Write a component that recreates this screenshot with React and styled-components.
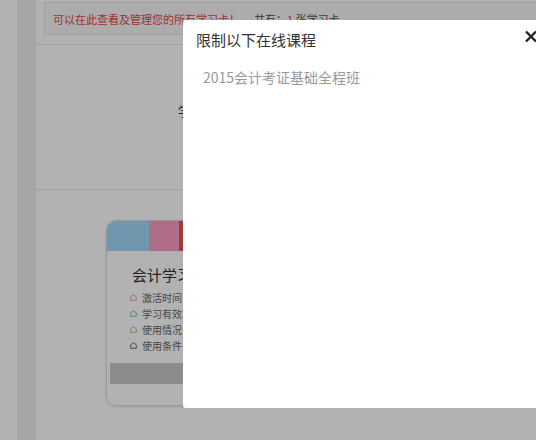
import React from 'react';
import styled, { createGlobalStyle } from 'styled-components';

const GlobalStyle = createGlobalStyle`
    html, body {
        margin: 0;
        padding: 0;
        width: 536px;
        height: 440px;
        overflow: hidden;
        background: #fff;
        font-family: "Noto Sans CJK SC", "Noto Sans", sans-serif;
    }
`;

const Page = styled.div`
    display: flex;
    height: 440px;
`;

const Gutter = styled.div`
    width: 17px;
    background: #fff;
`;

const Sidebar = styled.div`
    width: 19px;
    background: #eceff0;
`;

const Main = styled.div`
    flex: 1;
    display: flex;
    flex-direction: column;
`;

const Notice = styled.div`
    margin: 2px 0 0 8px;
    height: 31px;
    border: 1px solid #e6e6e6;
    border-right: none;
    background: #f6f6f6;
    padding-left: 8px;
    display: flex;
    align-items: center;
    font-size: 11px;
    white-space: nowrap;
`;

const Red = styled.span`
    color: #e04a40;
`;

const Count = styled.span`
    color: #555;
    margin-left: 14px;
`;

const Panel = styled.div`
    margin-top: 9px;
    height: 146px;
    border-top: 1px solid #e8e8e8;
    border-bottom: 1px solid #e8e8e8;
    box-sizing: border-box;
    padding: 56px 0 0 142px;
    font-size: 13px;
    line-height: 20px;
    color: #333;
`;

const CardArea = styled.div`
    padding: 30px 0 0 70px;
`;

const Card = styled.div`
    width: 210px;
    height: 184px;
    border: 1px solid #dcdcdc;
    border-radius: 10px;
    overflow: hidden;
    box-shadow: 0 1px 3px rgba(0, 0, 0, 0.12);
    display: flex;
    flex-direction: column;
`;

const Strip = styled.div`
    display: flex;
    height: 30px;
`;

const Band = styled.div`
    width: ${props => props.w};
    flex: ${props => (props.w ? 'none' : 1)};
    background: ${props => props.color};
`;

const CardTitle = styled.div`
    margin: 14px 0 0 25px;
    font-size: 15px;
    line-height: 20px;
    color: #333;
`;

const List = styled.ul`
    list-style: none;
    margin: 4px 0 0 0;
    padding: 0 0 0 23px;
`;

const Item = styled.li`
    display: flex;
    align-items: center;
    gap: 5px;
    height: 16px;
    font-size: 10px;
    color: #666;
`;

const Bar = styled.div`
    margin: 10px 3px 0;
    height: 21px;
    background: #ccc8c8;
`;

const Overlay = styled.div`
    position: fixed;
    inset: 0;
    background: rgba(0, 0, 0, 0.3);
`;

const Modal = styled.div`
    position: fixed;
    left: 183px;
    top: 20px;
    width: 370px;
    height: 388px;
    background: #fff;
    border-radius: 3px;
`;

const ModalTitle = styled.div`
    padding: 10px 0 0 13px;
    font-size: 15px;
    line-height: 20px;
    color: #333;
`;

const Close = styled.button`
    position: absolute;
    top: 10px;
    left: 341px;
    width: 14px;
    height: 13px;
    padding: 0;
    border: none;
    background: none;
    display: block;
`;

const Course = styled.div`
    padding: 17px 0 0 20px;
    font-size: 14px;
    line-height: 20px;
    color: #999;
`;

function Pent({ color }) {
    return (
        <svg width="7" height="7" viewBox="0 0 8 8">
            <path d="M4 0.8 L7.2 3.4 L7.2 7.2 L0.8 7.2 L0.8 3.4 Z" fill="none" stroke={color} strokeWidth="1" />
        </svg>
    );
}

const items = [
    ['#e88aa8', '激活时间：2015-06-01'],
    ['#6cb0a8', '学习有效期：365天'],
    ['#b8b088', '使用情况：已使用'],
    ['#555', '使用条件：限制以下课程'],
];

export default function App() {
    return (
        <>
            <GlobalStyle />
            <Page>
                <Gutter />
                <Sidebar />
                <Main>
                    <Notice>
                        <Red>可以在此查看及管理您的所有学习卡！</Red>
                        <Count>共有：<Red>1</Red> 张学习卡</Count>
                    </Notice>
                    <Panel>学习卡号：KJ2015000123</Panel>
                    <CardArea>
                        <Card>
                            <Strip>
                                <Band w="42px" color="#9fd8f8" />
                                <Band w="30px" color="#fd9cc3" />
                                <Band color="#f05050" />
                            </Strip>
                            <CardTitle>会计学习卡</CardTitle>
                            <List>
                                {items.map(([c, t]) => (
                                    <Item key={t}>
                                        <Pent color={c} />
                                        {t}
                                    </Item>
                                ))}
                            </List>
                            <Bar />
                        </Card>
                    </CardArea>
                </Main>
            </Page>
            <Overlay />
            <Modal>
                <ModalTitle>限制以下在线课程</ModalTitle>
                <Close aria-label="关闭">
                    <svg width="14" height="13" viewBox="0 0 14 13">
                        <path d="M2 1.5 L12 11.5 M12 1.5 L2 11.5" stroke="#222" strokeWidth="2.4" strokeLinecap="butt" />
                    </svg>
                </Close>
                <Course>2015会计考证基础全程班</Course>
            </Modal>
        </>
    );
}
